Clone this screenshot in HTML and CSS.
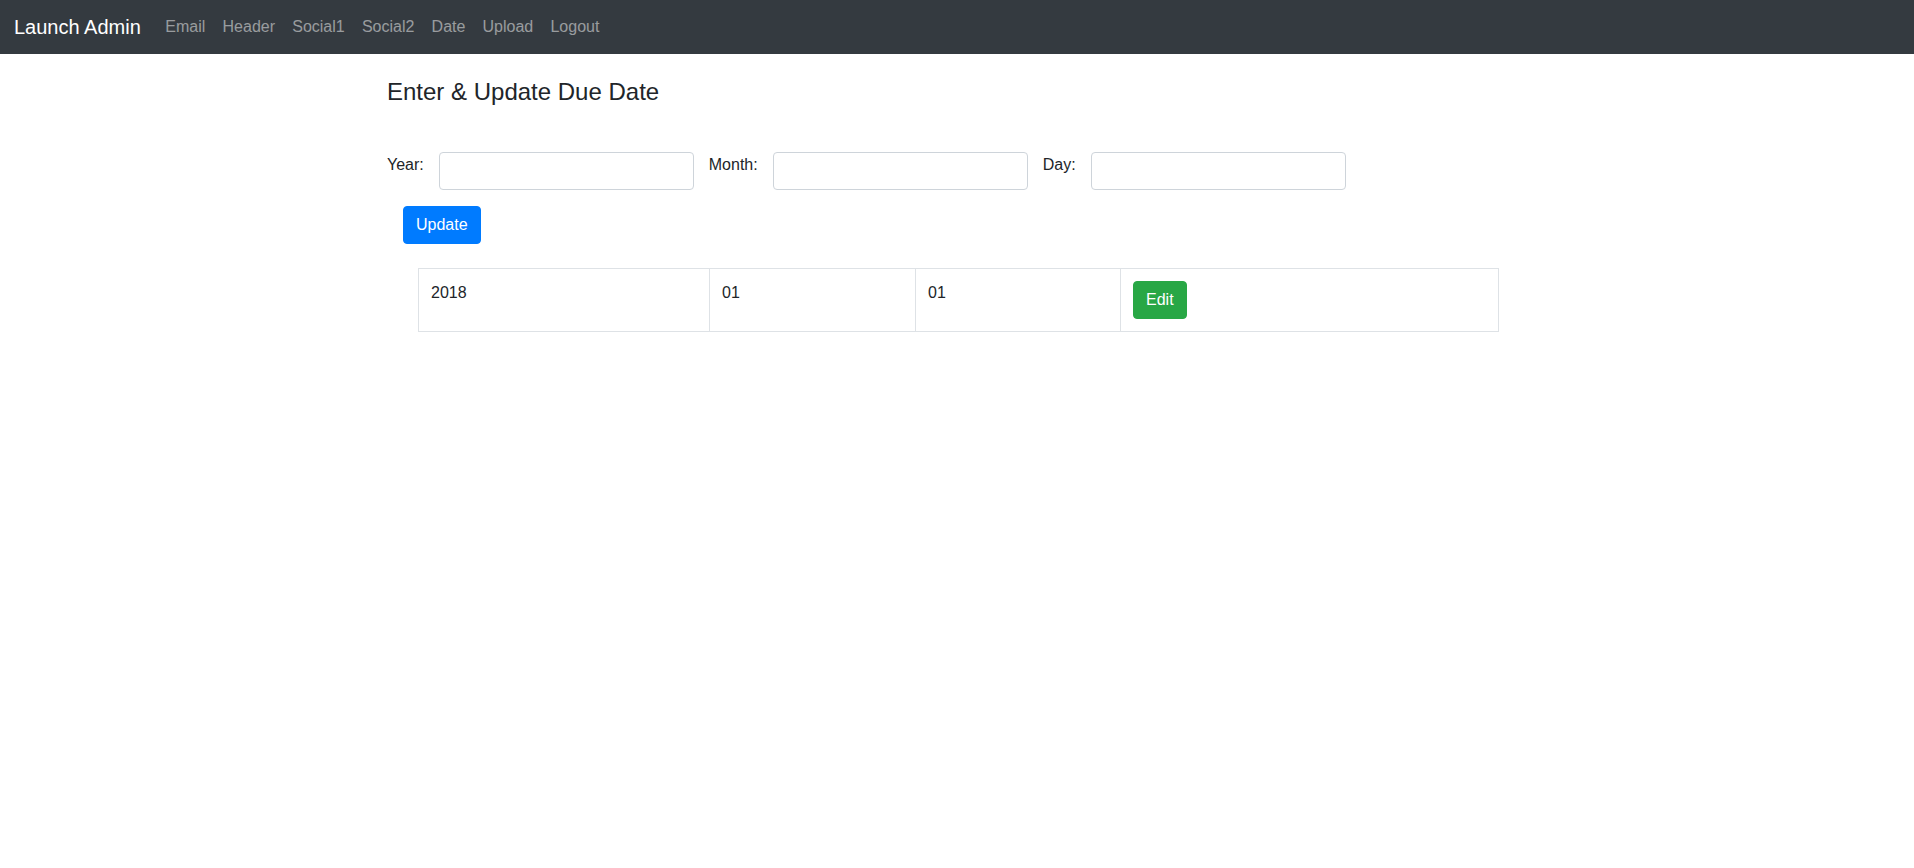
FILE: index.html
```html
<!DOCTYPE html>
<html lang="en">
<head>
<meta charset="utf-8">
<title>Launch Admin</title>
<link rel="stylesheet" href="styles.css">
</head>
<body>
<nav class="navbar">
  <a class="brand" href="#">Launch Admin</a>
  <ul class="nav">
    <li><a class="nav-link" href="#">Email</a></li>
    <li><a class="nav-link" href="#">Header</a></li>
    <li><a class="nav-link" href="#">Social1</a></li>
    <li><a class="nav-link" href="#">Social2</a></li>
    <li><a class="nav-link" href="#">Date</a></li>
    <li><a class="nav-link" href="#">Upload</a></li>
    <li><a class="nav-link" href="#">Logout</a></li>
  </ul>
</nav>
<main class="container">
  <h4 class="title">Enter &amp; Update Due Date</h4>
  <form class="date-form">
    <div class="form-row">
      <label class="label" for="year">Year:</label>
      <input class="input" id="year" type="text">
      <label class="label" for="month">Month:</label>
      <input class="input" id="month" type="text">
      <label class="label" for="day">Day:</label>
      <input class="input" id="day" type="text">
    </div>
    <div class="actions">
      <button type="button" class="btn btn-primary">Update</button>
    </div>
  </form>
  <div class="table-wrap">
    <table class="table">
      <colgroup>
        <col class="c1"><col class="c2"><col class="c3"><col class="c4">
      </colgroup>
      <tbody>
        <tr>
          <td>2018</td>
          <td>01</td>
          <td>01</td>
          <td><button type="button" class="btn btn-success">Edit</button></td>
        </tr>
      </tbody>
    </table>
  </div>
</main>
</body>
</html>
```

FILE: styles.css
```css
* { box-sizing: border-box; }

body {
  margin: 0;
  font-family: "Liberation Sans", Arial, sans-serif;
  font-size: 16px;
  line-height: 1.5;
  color: #212529;
  background: #fff;
}

.navbar {
  display: flex;
  align-items: center;
  height: 54px;
  padding: 0 14px;
  background: #343a40;
}

.brand {
  font-size: 20px;
  line-height: 30px;
  color: #fff;
  text-decoration: none;
  margin-right: 16px;
}

.nav {
  display: flex;
  list-style: none;
  margin: 0;
  padding: 0;
}

.nav-link {
  display: block;
  padding: 0 8.6px;
  color: rgba(255, 255, 255, 0.5);
  text-decoration: none;
  font-size: 16px;
  line-height: 24px;
}

.container {
  width: 1140px;
  margin: 0 auto;
}

.title {
  margin: 24px 0 0;
  font-size: 24px;
  font-weight: 400;
  line-height: 1.2;
}

.date-form {
  margin-top: 45px;
}

.form-row {
  display: flex;
  align-items: flex-start;
}

.label {
  margin-right: 15px;
  line-height: 24px;
  padding-top: 1px;
}

.input {
  width: 255px;
  height: 38px;
  margin-right: 15px;
  padding: 6px 12px;
  border: 1px solid #ced4da;
  border-radius: 4px;
  font: inherit;
  color: #495057;
  background: #fff;
}

.actions {
  margin-top: 16px;
  padding-left: 16px;
}

.btn {
  display: inline-block;
  height: 38px;
  padding: 6px 12px;
  border: 1px solid transparent;
  border-radius: 4px;
  font: inherit;
  line-height: 24px;
  color: #fff;
  cursor: pointer;
}

.btn-primary {
  background: #007bff;
  border-color: #007bff;
}

.btn-success {
  background: #28a745;
  border-color: #28a745;
}

.table-wrap {
  margin-top: 24px;
  padding-left: 31px;
}

.table {
  width: 1080px;
  border-collapse: collapse;
  table-layout: fixed;
}

.c1 { width: 291px; }
.c2 { width: 206px; }
.c3 { width: 205px; }
.c4 { width: 378px; }

.table td {
  padding: 12px;
  border: 1px solid #dee2e6;
  vertical-align: top;
  line-height: 24px;
}
```
